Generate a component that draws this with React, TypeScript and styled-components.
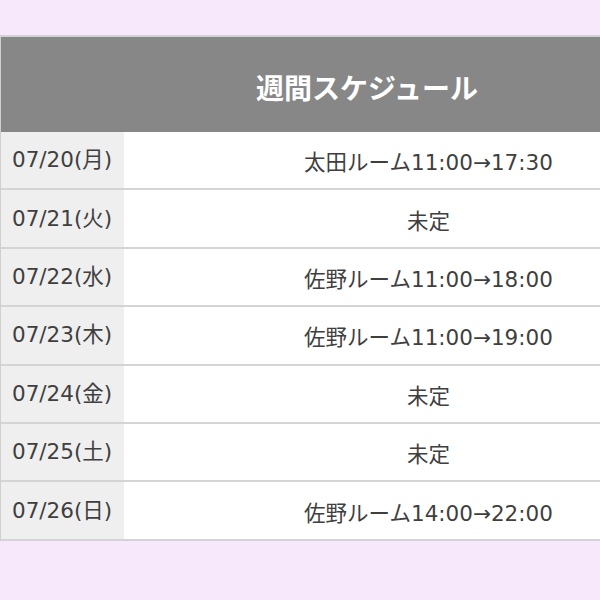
import React from "react";
import styled, { createGlobalStyle } from "styled-components";

const GlobalStyle = createGlobalStyle`
  html, body {
    margin: 0;
    padding: 0;
    background: #f8e8fc;
    overflow: hidden;
  }
  body {
    font-family: "DejaVu Sans", "Noto Sans CJK JP", sans-serif;
  }
`;

const Page = styled.div`
  width: 600px;
  height: 600px;
  padding-top: 35px;
  box-sizing: border-box;
  overflow: hidden;
`;

const Table = styled.div`
  width: 732px;
  display: flex;
  flex-direction: column;
  border-top: 2px solid #d2d2d2;
  border-left: 1px solid #cfcfcf;
`;

const Header = styled.div`
  height: 95px;
  background: #878787;
  color: #fff;
  display: flex;
  align-items: center;
  justify-content: center;
  font-family: "Noto Sans CJK JP", sans-serif;
  font-weight: 700;
  font-size: 28px;
  padding-top: 4px;
  box-sizing: border-box;
`;

const Row = styled.div`
  height: 58.4px;
  display: flex;
  border-bottom: 2px solid #d4d4d4;
  box-sizing: border-box;
  color: #3f3f3f;
  font-size: 21.5px;
`;

const DateCell = styled.div`
  width: 123px;
  background: #efefef;
  padding: 0 0 5px 11px;
  box-sizing: border-box;
  display: flex;
  align-items: center;
`;

const PlanCell = styled.div`
  flex: 1;
  background: #fff;
  display: flex;
  align-items: center;
  justify-content: center;
  padding-top: 1px;
  box-sizing: border-box;
`;

const schedule = [
  { date: "07/20(月)", plan: "太田ルーム11:00→17:30" },
  { date: "07/21(火)", plan: "未定" },
  { date: "07/22(水)", plan: "佐野ルーム11:00→18:00" },
  { date: "07/23(木)", plan: "佐野ルーム11:00→19:00" },
  { date: "07/24(金)", plan: "未定" },
  { date: "07/25(土)", plan: "未定" },
  { date: "07/26(日)", plan: "佐野ルーム14:00→22:00" },
];

const App = () => {
  return (
    <>
      <GlobalStyle />
      <Page>
        <Table>
          <Header>週間スケジュール</Header>
          {schedule.map((item) => (
            <Row key={item.date}>
              <DateCell>{item.date}</DateCell>
              <PlanCell>{item.plan}</PlanCell>
            </Row>
          ))}
        </Table>
      </Page>
    </>
  );
};

export default App;
